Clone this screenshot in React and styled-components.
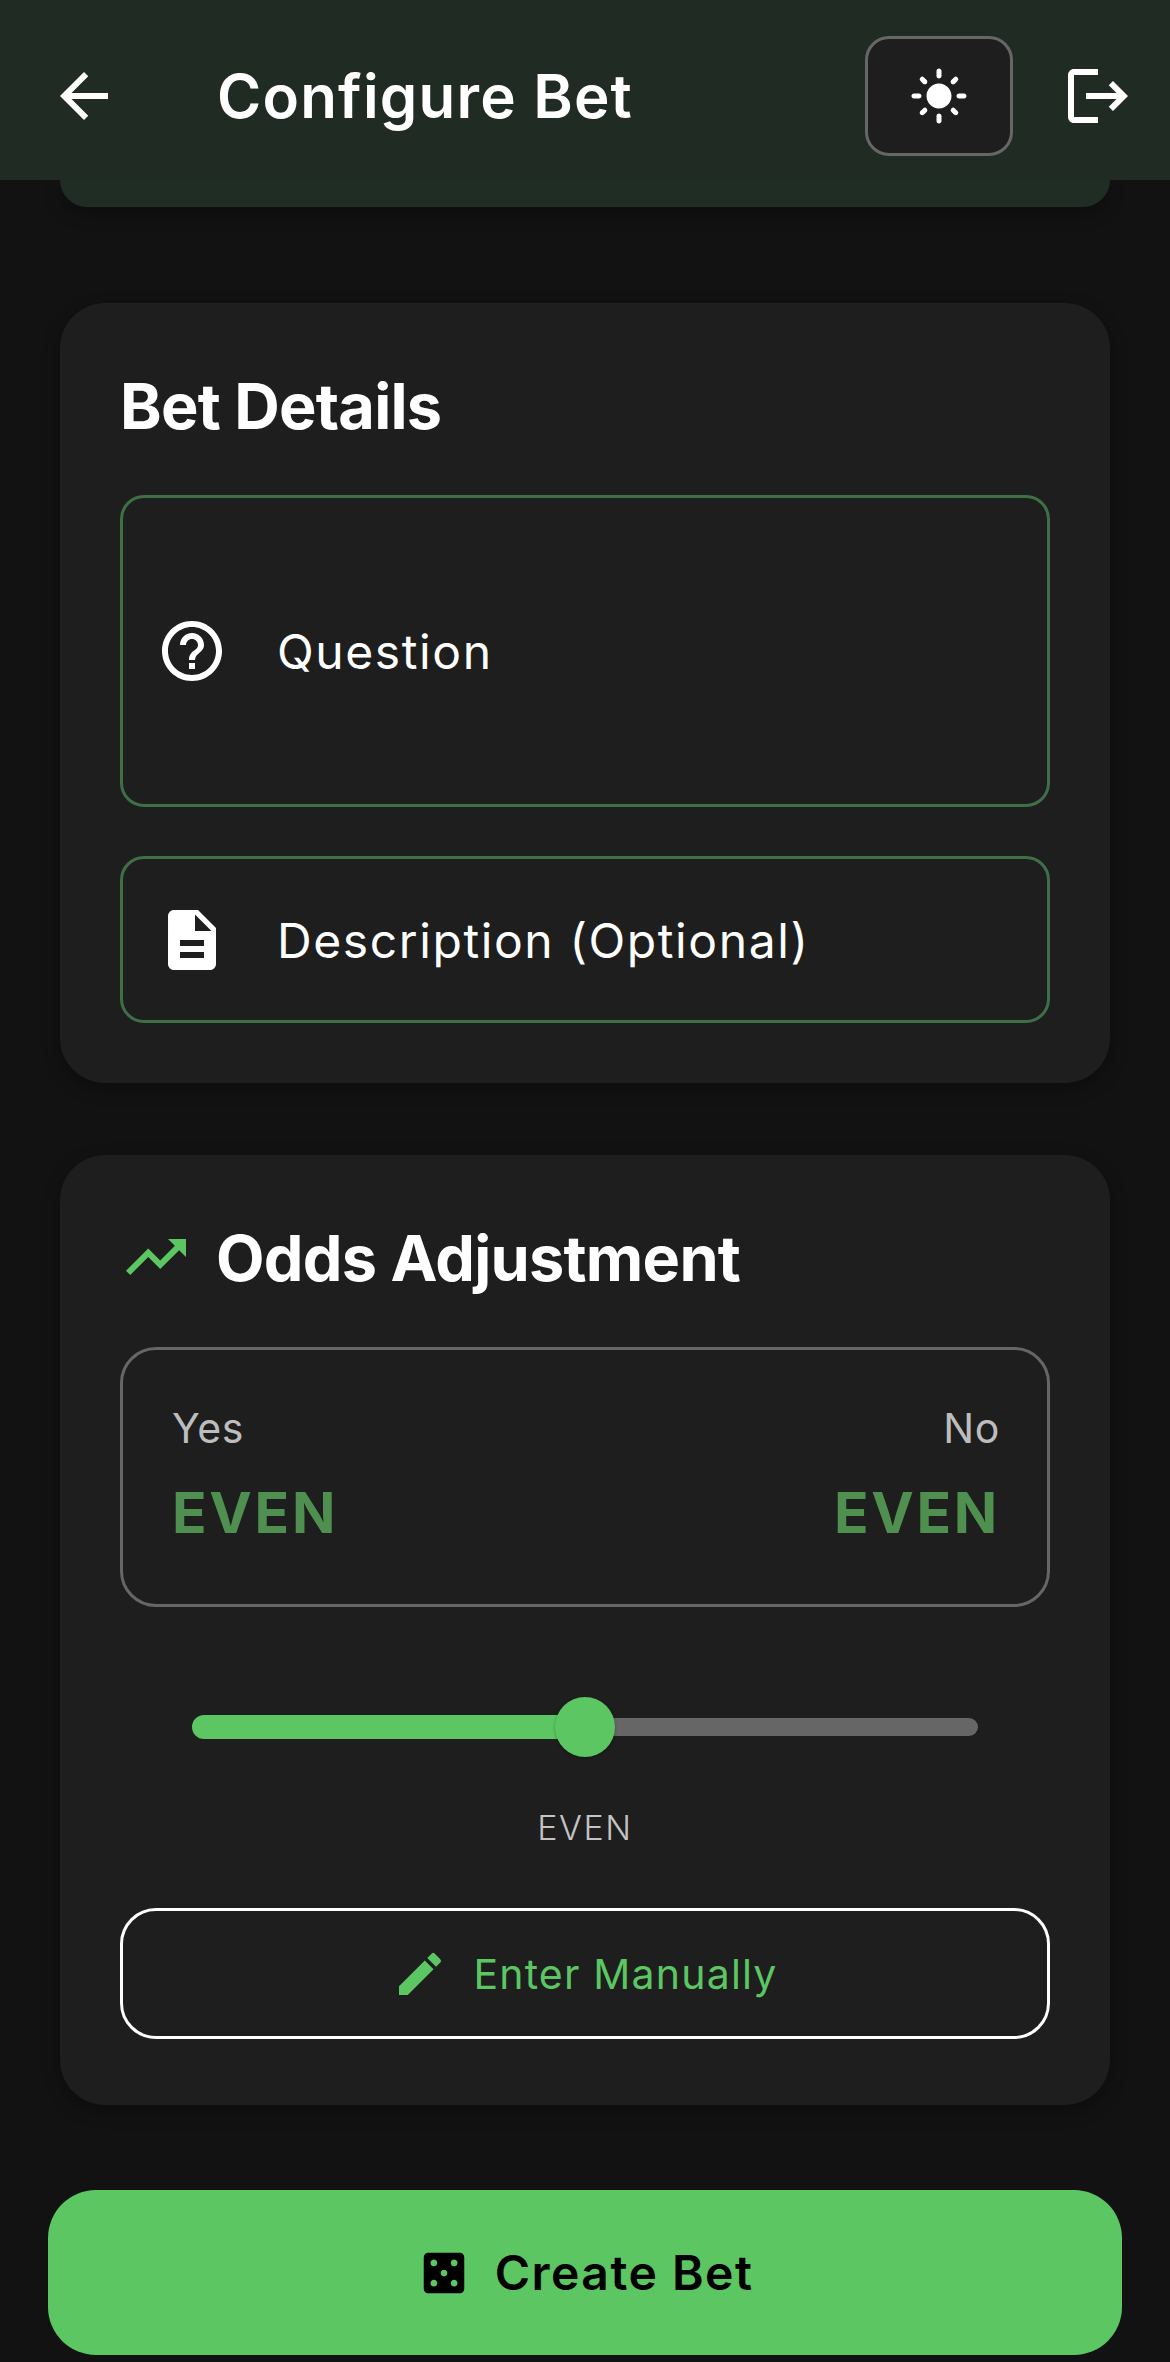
import React from "react";
import styled, { createGlobalStyle } from "styled-components";
import {
  MdArrowBack,
  MdLightMode,
  MdLogout,
  MdHelpOutline,
  MdDescription,
  MdTrendingUp,
  MdEdit,
  MdCasino,
} from "react-icons/md";

const Global = createGlobalStyle`
  html, body { margin: 0; padding: 0; background: #121212; }
  * { box-sizing: border-box; }
  body { font-family: Inter, "Liberation Sans", sans-serif; color: #fff; }
`;

const Page = styled.div`
  width: 1170px;
  height: 2362px;
  background: #121212;
  overflow: hidden;
  display: flex;
  flex-direction: column;
`;

const Header = styled.header`
  height: 180px;
  background: #202c23;
  display: flex;
  align-items: center;
  padding: 12px 36px 0 48px;
  color: #fff;
  position: relative;
  z-index: 1;
`;

const HeaderTitle = styled.h1`
  margin: 0 0 0 97px;
  flex: 1;
  font-size: 60px;
  font-weight: 600;
  letter-spacing: 1.2px;
  line-height: 64px;
`;

const ThemeButton = styled.div`
  width: 148px;
  height: 120px;
  background: #1e1e1e;
  border: 3px solid #666;
  border-radius: 24px;
  display: flex;
  align-items: center;
  justify-content: center;
  margin-right: 49px;
  margin-top: -1px;
`;

const PeekCard = styled.div`
  height: 27px;
  margin: 0 60px;
  background: #202d24;
  border-radius: 0 0 45px 45px;
  box-shadow: 0 6px 18px rgba(0, 0, 0, 0.3);
`;

const Content = styled.main`
  display: flex;
  flex-direction: column;
  padding: 96px 60px 0;
  gap: 72px;
`;

const Card = styled.section`
  background: #1e1e1e;
  border-radius: 45px;
  padding: 66px 60px 60px;
  box-shadow: 0 6px 18px rgba(0, 0, 0, 0.3);
  display: flex;
  flex-direction: column;
`;

const CardTitleRow = styled.div`
  display: flex;
  align-items: center;
  gap: 24px;
  height: 72px;
  margin-bottom: 54px;
  color: #5bc662;
`;

const CardTitle = styled.h2`
  margin: 0;
  padding-top: 2px;
  font-size: 63px;
  font-weight: 700;
  letter-spacing: -0.75px;
  line-height: 72px;
  color: #fff;
`;

const Fields = styled.div`
  display: flex;
  flex-direction: column;
  gap: 49px;
`;

const Field = styled.div`
  height: ${(p) => p.$height}px;
  border: 3px solid #3f6f45;
  border-radius: 24px;
  display: flex;
  align-items: center;
  padding-left: 33px;
  gap: 49px;
  color: #fff;
`;

const FieldLabel = styled.span`
  padding-top: 2px;
  font-size: 48px;
  font-weight: 400;
  letter-spacing: 1.6px;
  line-height: 60px;
`;

const OddsBox = styled.div`
  height: 260px;
  border: 3px solid #666;
  border-radius: 36px;
  padding: 54px 47px 48px 49px;
  display: flex;
  justify-content: space-between;
`;

const OddsSide = styled.div`
  display: flex;
  flex-direction: column;
  align-items: ${(p) => p.$align};
`;

const OddsLabel = styled.span`
  font-size: 41px;
  font-weight: 400;
  letter-spacing: 0.6px;
  line-height: 48px;
  color: #bdbdbd;
`;

const OddsValue = styled.span`
  margin-top: 25px;
  font-size: 57px;
  font-weight: 700;
  letter-spacing: 2.7px;
  line-height: 72px;
  color: #4f8f4f;
`;

const Slider = styled.div`
  margin: 90px 72px 0;
  height: 60px;
  display: flex;
  align-items: center;
  position: relative;
`;

const TrackOn = styled.div`
  flex: 1;
  height: 24px;
  background: #5bc662;
  border-radius: 12px 0 0 12px;
`;

const TrackOff = styled.div`
  flex: 1;
  height: 18px;
  background: #666;
  border-radius: 0 9px 9px 0;
`;

const Thumb = styled.div`
  position: absolute;
  left: 50%;
  top: 0;
  width: 60px;
  height: 60px;
  margin-left: -30px;
  border-radius: 50%;
  background: #5bc662;
  box-shadow: 0 1px 3px rgba(0, 0, 0, 0.3);
`;

const SliderCaption = styled.div`
  margin-top: 47px;
  height: 48px;
  line-height: 48px;
  text-align: center;
  font-size: 34px;
  font-weight: 300;
  letter-spacing: 1.6px;
  color: #c4c4c4;
`;

const ManualButton = styled.div`
  margin-top: 56px;
  height: 131px;
  border: 3px solid #fff;
  border-radius: 36px;
  display: flex;
  align-items: center;
  justify-content: center;
  gap: 25px;
  color: #5bc662;
  font-size: 41px;
  font-weight: 400;
  letter-spacing: 1.2px;
`;

const ManualCard = styled(Card)`
  padding-bottom: 66px;
`;

const CreateButton = styled.div`
  margin: 85px 48px 0;
  height: 165px;
  background: #5bc662;
  border-radius: 48px;
  display: flex;
  align-items: center;
  justify-content: center;
  gap: 24px;
  color: #000;
  font-size: 48px;
  font-weight: 600;
  letter-spacing: 1.5px;
`;

export default function App() {
  return (
    <>
      <Global />
      <Page>
        <Header>
          <MdArrowBack size={72} />
          <HeaderTitle>Configure Bet</HeaderTitle>
          <ThemeButton>
            <MdLightMode size={60} />
          </ThemeButton>
          <MdLogout size={72} />
        </Header>
        <PeekCard />
        <Content>
          <Card>
            <CardTitleRow>
              <CardTitle>Bet Details</CardTitle>
            </CardTitleRow>
            <Fields>
              <Field $height={312}>
                <MdHelpOutline size={72} />
                <FieldLabel>Question</FieldLabel>
              </Field>
              <Field $height={167}>
                <MdDescription size={72} />
                <FieldLabel>Description (Optional)</FieldLabel>
              </Field>
            </Fields>
          </Card>
          <ManualCard>
            <CardTitleRow>
              <MdTrendingUp size={72} />
              <CardTitle>Odds Adjustment</CardTitle>
            </CardTitleRow>
            <OddsBox>
              <OddsSide $align="flex-start">
                <OddsLabel>Yes</OddsLabel>
                <OddsValue>EVEN</OddsValue>
              </OddsSide>
              <OddsSide $align="flex-end">
                <OddsLabel>No</OddsLabel>
                <OddsValue>EVEN</OddsValue>
              </OddsSide>
            </OddsBox>
            <Slider>
              <TrackOn />
              <TrackOff />
              <Thumb />
            </Slider>
            <SliderCaption>EVEN</SliderCaption>
            <ManualButton>
              <MdEdit size={56} />
              Enter Manually
            </ManualButton>
          </ManualCard>
        </Content>
        <CreateButton>
          <MdCasino size={54} />
          Create Bet
        </CreateButton>
      </Page>
    </>
  );
}
